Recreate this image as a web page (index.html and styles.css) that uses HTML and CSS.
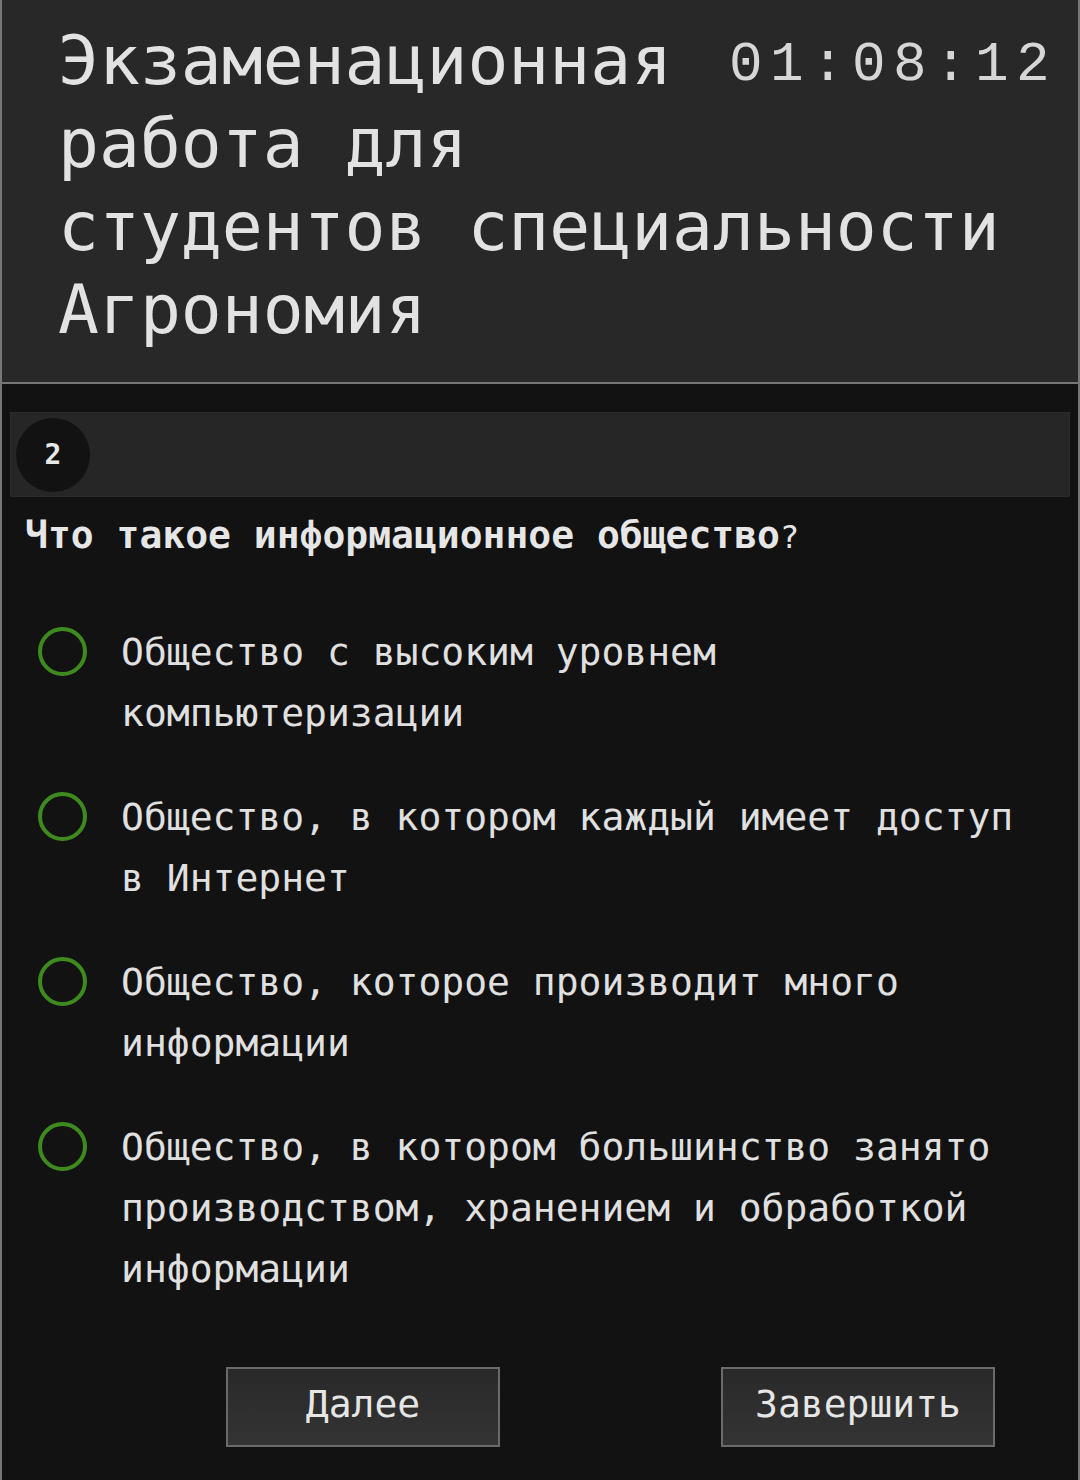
FILE: index.html
```html
<!DOCTYPE html>
<html lang="ru">
 <head>
   <meta charset="UTF-8">
   <meta name="viewport" content="width=device-width, initial-scale=1.0">
   <title>Экзамен</title>
   <link rel="stylesheet" href="styles.css">
 </head>
 <body>
  <div class="page">
    <div class="header">
      <div class="timer">01:08:12</div>
      <h1 class="title">Экзаменационная работа для студентов специальности Агрономия</h1>
    </div>

    <div class="question-bar">
      <div class="question-number">2</div>
    </div>

    <p class="question-text">Что такое информационное общество<span class="mark">?</span></p>

    <div class="answers">
      <label class="answer">
        <span class="radio"></span>
        <span class="answer-text">Общество с высоким уровнем компьютеризации</span>
      </label>
      <label class="answer">
        <span class="radio"></span>
        <span class="answer-text">Общество, в котором каждый имеет доступ в Интернет</span>
      </label>
      <label class="answer">
        <span class="radio"></span>
        <span class="answer-text">Общество, которое производит много информации</span>
      </label>
      <label class="answer">
        <span class="radio"></span>
        <span class="answer-text">Общество, в котором большинство занято производством, хранением и обработкой информации</span>
      </label>
    </div>

    <div class="nav-buttons">
      <button class="nav-button">Далее</button>
      <button class="nav-button">Завершить</button>
    </div>
  </div>
 </body>
</html>
```

FILE: styles.css
```css
body {
    margin: 0;
    padding: 0;
    background-color: #121212;
    font-family: "DejaVu Sans Mono", monospace;
    color: #e4e4e4;
}

/* Whole screen frame */
.page {
    box-sizing: border-box;
    min-height: 100vh;
    border: 2px solid #777;
    border-top: none;
    display: flex;
    flex-direction: column;
}

/* Header with title and timer */
.header {
    background-color: #282828;
    border-bottom: 2px solid #777;
    padding: 19px 21px 31px 56px;
}

.timer {
    float: right;
    margin-left: 20px;
    font-family: "Liberation Mono", "Courier New", monospace;
    font-size: 56px;
    letter-spacing: 7.4px;
    line-height: 83px;
    margin-top: 5px;
    color: #d6d6d6;
}

.title {
    margin: 0;
    font-size: 68px;
    font-weight: normal;
    line-height: 83px;
    color: #e2e2e2;
}

/* Question number strip */
.question-bar {
    margin: 28px 8px 0 8px;
    height: 85px;
    box-sizing: border-box;
    padding: 4px 5px;
    background-color: #262626;
    border: 1px solid #2b2b2b;
    display: flex;
    align-items: center;
}

.question-number {
    width: 74px;
    height: 74px;
    border-radius: 50%;
    background-color: #121212;
    display: flex;
    justify-content: center;
    align-items: center;
    font-size: 28px;
    font-weight: bold;
    color: #e8e8e8;
}

.question-text {
    margin: 8px 0 0 0;
    padding-left: 23px;
    font-size: 38px;
    font-weight: bold;
    line-height: 61px;
    color: #e6e6e6;
}

.question-text .mark {
    font-weight: normal;
    font-size: 32px;
}

/* Answer options */
.answers {
    margin-top: 54px;
    display: flex;
    flex-direction: column;
    gap: 43px;
    padding: 0 30px 0 36px;
}

.answer {
    display: flex;
    align-items: flex-start;
    cursor: pointer;
}

.radio {
    flex: none;
    box-sizing: border-box;
    width: 49px;
    height: 49px;
    margin-top: 5px;
    margin-right: 34px;
    border: 4px solid #3f8a1f;
    border-radius: 50%;
}

.answer-text {
    font-size: 38px;
    line-height: 61px;
    color: #e0e0e0;
}

/* Bottom buttons */
.nav-buttons {
    margin-top: auto;
    display: flex;
    justify-content: space-between;
    padding: 67px 83px 33px 224px;
}

.nav-button {
    width: 274px;
    height: 80px;
    padding-bottom: 8px;
    border: 2px solid #6a6a6a;
    background: linear-gradient(#292929, #343434);
    color: #e6e6e6;
    font-family: "DejaVu Sans Mono", monospace;
    font-size: 38px;
    cursor: pointer;
}
```
